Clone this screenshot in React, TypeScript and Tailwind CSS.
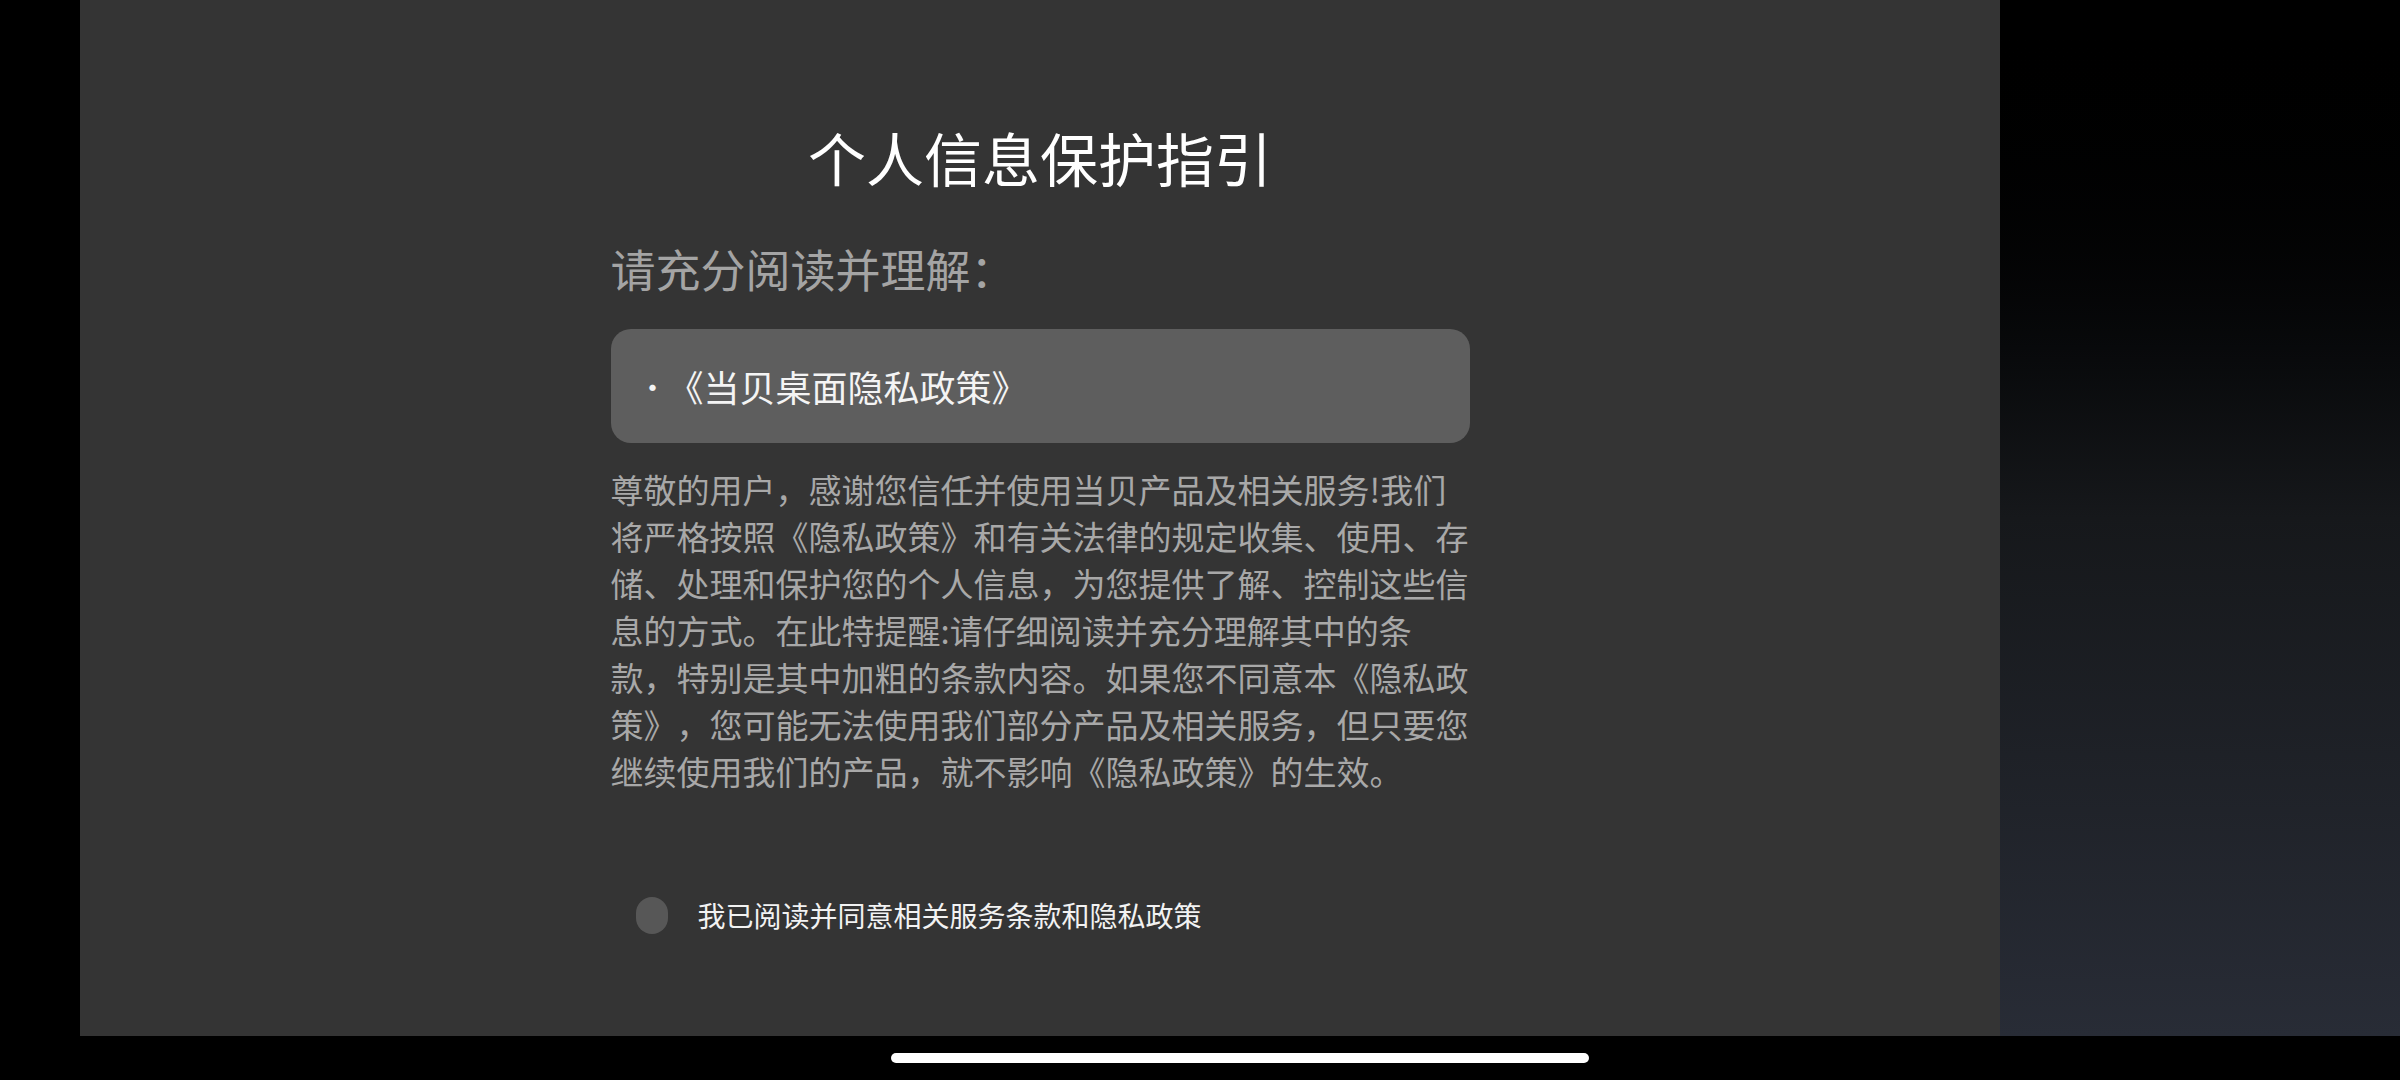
import React, { useState } from "react";

const policyLines = [
  "尊敬的用户，感谢您信任并使用当贝产品及相关服务!我们",
  "将严格按照《隐私政策》和有关法律的规定收集、使用、存",
  "储、处理和保护您的个人信息，为您提供了解、控制这些信",
  "息的方式。在此特提醒:请仔细阅读并充分理解其中的条",
  "款，特别是其中加粗的条款内容。如果您不同意本《隐私政",
  "策》，您可能无法使用我们部分产品及相关服务，但只要您",
  "继续使用我们的产品，就不影响《隐私政策》的生效。",
];

export default function App() {
  const [agreed, setAgreed] = useState(false);

  return (
    <div
      className="flex h-[1080px] w-[2400px] flex-col bg-black [text-spacing-trim:space-all]"
      style={{ fontFamily: '"Noto Sans CJK SC", "Noto Sans", sans-serif' }}
    >
      <div className="flex h-[1036px]">
        <div className="w-[80px] bg-black" />

        {/* guide panel */}
        <div className="flex w-[1920px] flex-col items-center bg-[#343434] pt-[117px]">
          <div className="flex w-[859px] flex-col">
            <h1 className="text-center text-[58px] leading-[80px] font-normal text-white">
              个人信息保护指引
            </h1>
            <p className="mt-[42px] text-[45px] leading-[60px] text-[#a4a4a4]">
              请充分阅读并理解：
            </p>

            <button className="mt-[30px] flex h-[114px] w-full items-center rounded-[20px] bg-[#5e5e5e] pl-[27px] text-left text-[36px] text-[#f4f4f4]">
              <span className="text-[30px]">·</span>
              <span>《当贝桌面隐私政策》</span>
            </button>

            <div className="mt-[23px] text-[33px] leading-[47px] text-[#a8a8a8]">
              {policyLines.map((line) => (
                <div key={line} className="whitespace-nowrap">
                  {line}
                </div>
              ))}
            </div>

            <div className="mt-[100px] flex h-[40px] items-center gap-[30px] pl-[25px]">
              <button
                onClick={() => setAgreed((prev) => !prev)}
                className={
                  agreed
                    ? "h-[37px] w-[32px] rounded-full bg-[#8a8a8a]"
                    : "h-[37px] w-[32px] rounded-full bg-[#575757]"
                }
              />
              <span className="text-[28px] leading-[40px] text-[#f2f2f2]">
                我已阅读并同意相关服务条款和隐私政策
              </span>
            </div>
          </div>
        </div>

        <div className="w-[400px] bg-linear-to-b from-[#000000] via-[#16181b] to-[#282c36]" />
      </div>

      {/* gesture bar */}
      <div className="flex h-[44px] items-start pt-[17px]">
        <div className="ml-[891px] h-[10px] w-[698px] rounded-full bg-white" />
      </div>
    </div>
  );
}
